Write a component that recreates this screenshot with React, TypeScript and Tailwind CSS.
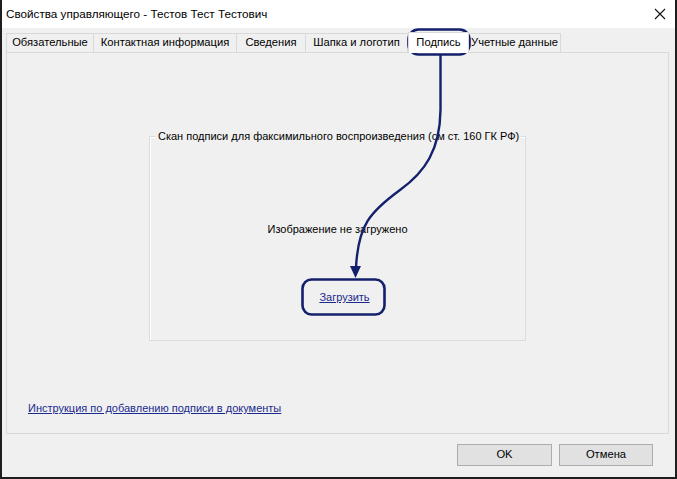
import React from "react";

const tabs = [
  { label: "Обязательные", w: 88 },
  { label: "Контактная информация", w: 143 },
  { label: "Сведения", w: 69 },
  { label: "Шапка и логотип", w: 102 },
  { label: "Подпись", w: 61, active: true },
  { label: "Учетные данные", w: 92 },
];

export default function App() {
  return (
    <div
      className="relative w-[677px] h-[479px] bg-[#f0f0f0] border-l-2 border-r-2 border-b-2 border-[#1e1e1e] flex flex-col text-[#000] text-[11.2px] overflow-hidden whitespace-nowrap"
      style={{ fontFamily: '"Liberation Sans", Arial, sans-serif' }}
    >
      {/* title bar */}
      <div className="h-[28px] bg-white flex items-center justify-between pl-[4px] pr-[9px] shrink-0">
        <span className="text-[11.7px] leading-none">Свойства управляющего - Тестов Тест Тестович</span>
        <svg width="12" height="12" viewBox="0 0 12 12">
          <path d="M1 1 L11 11 M11 1 L1 11" stroke="#111" strokeWidth="1.1" />
        </svg>
      </div>

      <div className="flex flex-col pl-[4px] pr-[6px] pt-[5px]">
        {/* tabs */}
        <div className="flex h-[19px] items-end">
          {tabs.map((t) => (
            <div
              key={t.label}
              className={
                t.active
                  ? "h-[21px] bg-white border border-b-0 border-[#d9d9d9] flex items-center justify-center leading-none -mb-px z-10"
                  : "h-[19px] bg-[#f0f0f0] border border-b-0 border-l-0 first:border-l border-[#d9d9d9] flex items-center justify-center leading-none"
              }
              style={{ width: t.w }}
            >
              {t.label}
            </div>
          ))}
        </div>

        {/* panel */}
        <div className="h-[382px] border border-[#d9d9d9] bg-[#f0f0f0] flex flex-col items-center">
          {/* group box */}
          <div className="relative mt-[83px] w-[377px] h-[205px] border border-[#dcdcdc] shadow-[inset_1px_1px_0_#ffffff] flex flex-col items-center">
            <div className="absolute -top-[9px] left-[6px] bg-[#f0f0f0] px-[2px] leading-[16px] text-[11px]">
              Скан подписи для факсимильного воспроизведения (см ст. 160 ГК РФ)
            </div>
            <div className="mt-[84px] text-[11px] leading-[16px]">Изображение не загружено</div>
            <div className="mt-[52px] ml-[14px] text-[11px] leading-[16px] text-[#1b2a8f] underline">
              Загрузить
            </div>
          </div>
          <div className="self-start ml-[21px] mt-[59px] text-[11px] leading-[16px] text-[#1b2a8f] underline">
            Инструкция по добавлению подписи в документы
          </div>
        </div>

        {/* footer */}
        <div className="flex justify-end gap-[7px] mt-[10px] pr-[16px]">
          <div className="w-[95px] h-[22px] bg-[#e1e1e1] border border-[#adadad] flex items-center justify-center leading-none">
            OK
          </div>
          <div className="w-[94px] h-[22px] bg-[#e1e1e1] border border-[#adadad] flex items-center justify-center leading-none">
            Отмена
          </div>
        </div>
      </div>

      {/* annotation overlay */}
      <svg
        className="absolute left-0 top-0 pointer-events-none"
        width="677"
        height="479"
        viewBox="0 0 677 479"
        style={{ marginLeft: -2 }}
      >
        <rect x="408.5" y="29.5" width="61" height="25" rx="10" fill="none" stroke="#14206b" strokeWidth="2.6" />
        <path
          d="M440.5 55 L440.5 110 C440 150 425 172 400 190 C370 212 358 225 356 268"
          fill="none"
          stroke="#14206b"
          strokeWidth="2.4"
        />
        <path d="M350 266 L361 266 L355.5 278 Z" fill="#14206b" />
        <rect x="302.5" y="279.5" width="82" height="35" rx="9" fill="none" stroke="#14206b" strokeWidth="2.6" />
      </svg>
    </div>
  );
}
